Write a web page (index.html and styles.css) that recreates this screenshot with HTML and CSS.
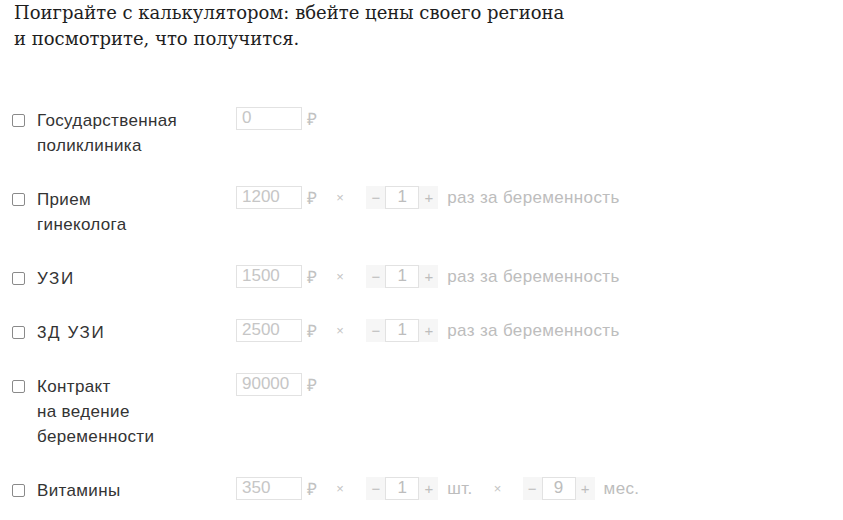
FILE: index.html
```html
<!DOCTYPE html>
<html lang="ru">
<head>
<meta charset="utf-8">
<link rel="stylesheet" href="styles.css">
</head>
<body>
<div class="page">
  <p class="intro">Поиграйте с калькулятором: вбейте цены своего региона<br>и посмотрите, что получится.</p>

  <div class="calc">
    <div class="row">
      <span class="check"></span>
      <div class="label">Государственная<br>поликлиника</div>
      <div class="controls">
        <div class="price">0</div><span class="rub">₽</span>
      </div>
    </div>

    <div class="row">
      <span class="check"></span>
      <div class="label">Прием<br>гинеколога</div>
      <div class="controls">
        <div class="price">1200</div><span class="rub">₽</span>
        <span class="times">×</span>
        <div class="stepper"><span class="op">−</span><span class="num">1</span><span class="op">+</span></div>
        <span class="unit">раз за беременность</span>
      </div>
    </div>

    <div class="row">
      <span class="check"></span>
      <div class="label spaced">УЗИ</div>
      <div class="controls">
        <div class="price">1500</div><span class="rub">₽</span>
        <span class="times">×</span>
        <div class="stepper"><span class="op">−</span><span class="num">1</span><span class="op">+</span></div>
        <span class="unit">раз за беременность</span>
      </div>
    </div>

    <div class="row">
      <span class="check"></span>
      <div class="label spaced">3Д УЗИ</div>
      <div class="controls">
        <div class="price">2500</div><span class="rub">₽</span>
        <span class="times">×</span>
        <div class="stepper"><span class="op">−</span><span class="num">1</span><span class="op">+</span></div>
        <span class="unit">раз за беременность</span>
      </div>
    </div>

    <div class="row">
      <span class="check"></span>
      <div class="label">Контракт<br>на ведение<br>беременности</div>
      <div class="controls">
        <div class="price">90000</div><span class="rub">₽</span>
      </div>
    </div>

    <div class="row">
      <span class="check"></span>
      <div class="label">Витамины</div>
      <div class="controls">
        <div class="price">350</div><span class="rub">₽</span>
        <span class="times">×</span>
        <div class="stepper"><span class="op">−</span><span class="num">1</span><span class="op">+</span></div>
        <span class="unit">шт.</span>
        <span class="times times-wide">×</span>
        <div class="stepper"><span class="op">−</span><span class="num">9</span><span class="op">+</span></div>
        <span class="unit">мес.</span>
      </div>
    </div>
  </div>
</div>
</body>
</html>
```

FILE: styles.css
```css
html, body {
  margin: 0;
  padding: 0;
  background: #ffffff;
}

.page {
  padding: 0 12px;
}

.intro {
  margin: 0;
  padding-left: 2px;
  font-family: "DejaVu Serif", "Liberation Serif", serif;
  font-size: 18px;
  line-height: 26px;
  color: #1e1e1e;
}

.calc {
  margin-top: 56px;
  font-family: "Liberation Sans", Arial, sans-serif;
  font-size: 17px;
  letter-spacing: 0.35px;
}

.row {
  display: flex;
  align-items: flex-start;
  margin-bottom: 29px;
}

.check {
  flex: none;
  width: 11px;
  height: 11px;
  margin-top: 6px;
  margin-right: 12px;
  border: 1px solid #8a8a8a;
  border-radius: 2px;
  background: #fff;
}

.label {
  flex: none;
  width: 199px;
  line-height: 25px;
  color: #333333;
}

.label.spaced {
  letter-spacing: 1.6px;
}

.controls {
  display: flex;
  align-items: center;
  height: 23px;
  margin-top: -1px;
  color: #bdbdbd;
}

.price {
  box-sizing: border-box;
  width: 66px;
  height: 23px;
  padding-left: 5px;
  border: 1px solid #e2e2e2;
  line-height: 20px;
  letter-spacing: 0;
  color: #c6c6c6;
}

.rub {
  margin-left: 5px;
  color: #c2c2c2;
}

.times {
  margin-left: 19px;
  margin-right: 22px;
  font-size: 13px;
  color: #c4c4c4;
}

.times-wide {
  margin-left: 21px;
  margin-right: 21px;
}

.stepper {
  display: flex;
  align-items: center;
  height: 23px;
  background: #f6f6f6;
  letter-spacing: 0;
}

.op {
  width: 19px;
  text-align: center;
  font-size: 15px;
  color: #bdbdbd;
}

.num {
  box-sizing: border-box;
  width: 34px;
  height: 23px;
  border: 1px solid #e2e2e2;
  background: #ffffff;
  text-align: center;
  line-height: 20px;
  color: #bdbdbd;
}

.unit {
  margin-left: 9px;
  color: #bdbdbd;
}
```
